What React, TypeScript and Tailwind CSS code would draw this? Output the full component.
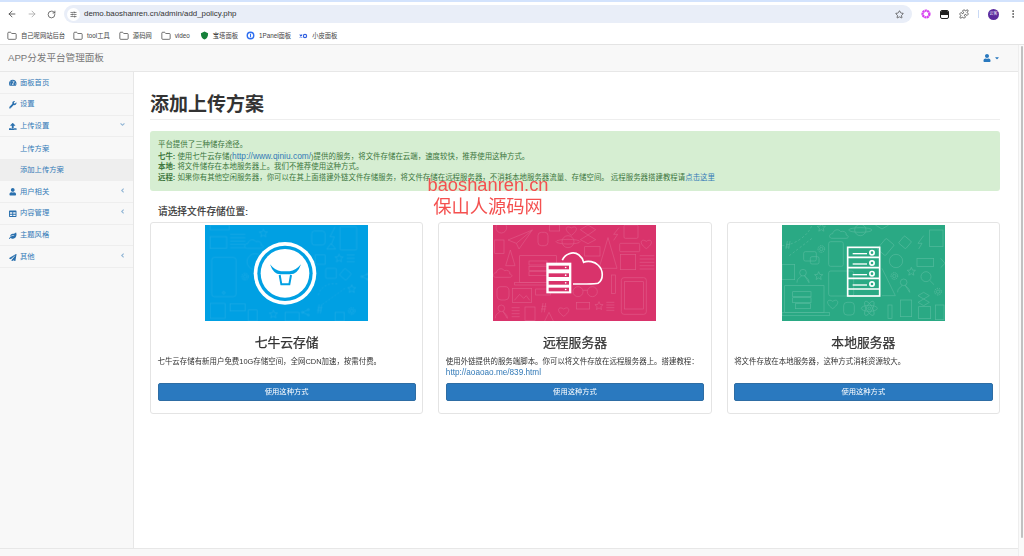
import type { ReactNode } from "react";
import { ArrowLeft, ArrowRight, RotateCw, Star as StarIcon, SlidersHorizontal, Folder, Puzzle, EllipsisVertical } from "lucide-react";
import { FaTachometerAlt, FaWrench, FaUpload, FaUser, FaTable, FaLeaf, FaPaperPlane, FaAngleDown, FaAngleLeft, FaCaretDown } from "react-icons/fa";

const fontStack = "font-['Liberation_Sans','Noto_Sans_CJK_SC',sans-serif]";

function Star({ x, y, r = 13 }: { x: number; y: number; r?: number }) {
  const pts = Array.from({ length: 10 }, (_, i) => {
    const rad = i % 2 ? r * 0.45 : r;
    const a = (Math.PI / 5) * i - Math.PI / 2;
    return `${x + rad * Math.cos(a)},${y + rad * Math.sin(a)}`;
  }).join(" ");
  return <polygon points={pts} />;
}

function Heart({ x, y }: { x: number; y: number }) {
  return <path transform={`translate(${x} ${y})`} d="M0 16 C-26 -2 -14 -16 0 -6 C14 -16 26 -2 0 16Z" />;
}

function Cloud({ x, y }: { x: number; y: number }) {
  return <path transform={`translate(${x} ${y})`} d="M-22 12 C-32 12 -32 -2 -20 -2 C-18 -14 -2 -18 4 -8 C14 -12 24 -4 20 2 C30 4 28 12 20 12Z" />;
}

function Gear({ x, y }: { x: number; y: number }) {
  return (
    <g>
      <circle cx={x} cy={y} r={5} />
      <circle cx={x} cy={y} r={10} strokeDasharray="4 3" strokeWidth={3} />
    </g>
  );
}

function Lines({ x, y, w, n, step = 10 }: { x: number; y: number; w: number; n: number; step?: number }) {
  return (
    <g>
      {Array.from({ length: n }, (_, i) => (
        <line key={i} x1={x} x2={x + w} y1={y + i * step} y2={y + i * step} />
      ))}
    </g>
  );
}

function User({ x, y }: { x: number; y: number }) {
  return (
    <g>
      <circle cx={x} cy={y} r={10} />
      <path d={`M${x - 18} ${y + 30} C${x - 18} ${y + 14} ${x - 6} ${y + 16} ${x - 5} ${y + 9} M${x + 5} ${y + 9} C${x + 6} ${y + 16} ${x + 18} ${y + 14} ${x + 18} ${y + 30}Z`} />
    </g>
  );
}

function Share({ x, y }: { x: number; y: number }) {
  return (
    <g>
      <path d={`M${x + 10} ${y - 8} L${x - 8} ${y} L${x + 10} ${y + 8}`} />
      <circle cx={x + 10} cy={y - 8} r={3} />
      <circle cx={x - 8} cy={y} r={3} />
      <circle cx={x + 10} cy={y + 8} r={3} />
    </g>
  );
}

function Banner({ bg, pattern, patternOpacity, children }: { bg: string; pattern: ReactNode; patternOpacity: number; children: ReactNode }) {
  return (
    <svg viewBox="0 0 489 288" className="block h-[96px] w-[163px]">
      <rect width="489" height="288" fill={bg} />
      <g fill="none" stroke="#fff" strokeWidth={2} opacity={patternOpacity}>
        {pattern}
      </g>
      {children}
    </svg>
  );
}

const bluePattern = (
  <>
    <rect x="15" y="35" width="50" height="35" />
    <rect x="15" y="0" width="58" height="14" />
    <Lines x={75} y={28} w={46} n={5} />
    <rect x="20" y="97" width="73" height="118" rx="8" />
    <circle cx="56" cy="203" r="4" />
    <Cloud x={148} y={58} />
    <circle cx="150" cy="110" r="24" />
    <Gear x={120} y={155} />
    <Star x={175} y={25} />
    <rect x="15" y="235" width="45" height="45" />
    <rect x="75" y="236" width="45" height="22" />
    <rect x="130" y="255" width="26" height="33" />
    <Star x={205} y={268} />
    <rect x="240" y="262" width="42" height="26" />
    <Share x={300} y={262} />
    <path d="M338 248 H352 M336 256 H350 M342 238 L338 266 M350 238 L346 266" />
    <rect x="320" y="18" width="40" height="42" rx="8" />
    <path d="M390 5 L375 35 H388 L378 60" />
    <rect x="405" y="5" width="50" height="70" rx="3" />
    <path d="M365 72 L378 55 L392 72Z" />
    <rect x="330" y="90" width="30" height="28" />
    <Star x={402} y={100} />
    <Lines x={425} y={90} w={24} n={3} />
    <rect x="362" y="130" width="32" height="30" rx="3" />
    <rect x="408" y="135" width="26" height="26" rx="3" transform="rotate(40 421 148)" />
    <Share x={478} y={155} />
    <Star x={440} y={192} />
    <path d="M340 210 C345 185 375 170 400 178 M352 238 L420 190" strokeDasharray="6 5" />
    <Gear x={440} y={258} />
    <rect x="390" y="262" width="28" height="26" />
  </>
);

const pinkPattern = (
  <>
    <path d="M45 45 L118 15 L78 72 L70 55Z M70 55 L118 15" />
    <rect x="5" y="45" width="28" height="40" />
    <circle cx="25" cy="8" r="16" />
    <rect x="135" y="22" width="30" height="40" rx="10" />
    <rect x="170" y="0" width="30" height="18" />
    <Heart x={235} y={15} />
    <circle cx="225" cy="50" r="18" />
    <ellipse cx="225" cy="50" rx="36" ry="7" />
    <path d="M262 14 L285 0 L308 14 L285 30Z M262 44 L285 30 L308 44 L285 56Z" />
    <path d="M378 8 L362 28 H374 L362 46" />
    <rect x="393" y="0" width="42" height="40" rx="4" />
    <Heart x={460} y={55} />
    <path d="M52 75 L38 122 H66Z" />
    <path d="M345 38 L318 130 H372Z" />
    <rect x="380" y="55" width="60" height="25" rx="3" />
    <rect x="275" y="65" width="46" height="28" />
    <rect x="382" y="88" width="46" height="46" />
    <Lines x={440} y={92} w={44} n={5} />
    <rect x="80" y="92" width="110" height="80" />
    <rect x="65" y="172" width="130" height="8" />
    <rect x="108" y="108" width="54" height="12" />
    <rect x="108" y="124" width="54" height="12" />
    <rect x="108" y="140" width="54" height="12" />
    <Cloud x={30} y={145} />
    <rect x="355" y="150" width="12" height="55" />
    <rect x="385" y="158" width="75" height="110" rx="8" />
    <rect x="394" y="170" width="57" height="82" />
    <rect x="12" y="185" width="36" height="40" rx="12" />
    <rect x="58" y="190" width="58" height="42" />
    <path d="M64 226 L80 208 L92 220 L100 212 L110 226" />
    <rect x="128" y="192" width="44" height="18" />
    <circle cx="255" cy="200" r="15" />
    <circle cx="298" cy="200" r="15" />
    <path d="M270 196 H283" />
    <Lines x={56} y={248} w={24} n={4} step={9} />
    <rect x="96" y="246" width="30" height="40" />
    <path d="M146 244 H160 M144 252 H158 M150 234 L146 262 M158 234 L154 262" />
    <Heart x={212} y={258} />
    <rect x="250" y="232" width="40" height="20" />
    <Star x={318} y={243} />
    <Lines x={340} y={232} w={24} n={4} step={8} />
    <path d="M168 262 L155 288 M168 262 L181 288" />
    <User x={25} y={250} />
  </>
);

const greenPattern = (
  <>
    <path d="M0 62 C40 60 80 30 90 0 M22 92 L90 40" strokeDasharray="7 6" />
    <Star x={118} y={8} />
    <Cloud x={172} y={28} />
    <circle cx="235" cy="15" r="17" />
    <ellipse cx="235" cy="15" rx="35" ry="7" />
    <path d="M12 58 H24 M10 66 H22 M16 48 L12 72 M24 48 L20 72" />
    <Gear x={118} y={72} />
    <rect x="140" y="50" width="44" height="74" rx="6" />
    <rect x="65" y="80" width="38" height="28" rx="5" />
    <rect x="85" y="95" width="26" height="22" rx="5" />
    <rect x="295" y="45" width="32" height="42" rx="3" transform="rotate(40 311 66)" />
    <path d="M280 0 L300 12 L320 0" />
    <rect x="355" y="38" width="28" height="28" rx="3" transform="rotate(40 369 52)" />
    <path d="M425 32 L408 55 H420 L410 72" />
    <rect x="443" y="15" width="40" height="50" />
    <circle cx="342" cy="108" r="20" />
    <rect x="405" y="100" width="50" height="24" />
    <path d="M476 100 L489 115 L476 128" />
    <Star x={110} y={153} />
    <User x={63} y={143} />
    <rect x="0" y="118" width="38" height="46" />
    <Gear x={337} y={153} />
    <Star x={388} y={140} />
    <circle cx="432" cy="155" r="15" />
    <path d="M443 166 L456 179" />
    <rect x="140" y="138" width="75" height="75" rx="6" />
    <path d="M300 130 L340 212 H300" />
    <User x={365} y={172} />
    <rect x="8" y="182" width="118" height="80" />
    <rect x="0" y="262" width="142" height="10" />
    <rect x="32" y="200" width="55" height="15" />
    <rect x="32" y="218" width="55" height="15" />
    <rect x="40" y="236" width="45" height="15" />
    <Heart x={152} y={235} />
    <rect x="185" y="232" width="32" height="38" rx="10" />
    <circle cx="262" cy="250" r="4" />
    <ellipse cx="262" cy="250" rx="24" ry="9" />
    <ellipse cx="262" cy="250" rx="24" ry="9" transform="rotate(60 262 250)" />
    <ellipse cx="262" cy="250" rx="24" ry="9" transform="rotate(120 262 250)" />
    <rect x="318" y="240" width="12" height="40" />
    <rect x="355" y="225" width="34" height="50" />
    <path d="M408 212 L425 202 L442 212 L425 222Z M408 232 L425 222 L442 232 L425 242Z" />
    <Gear x={468} y={200} />
    <rect x="410" y="245" width="36" height="36" />
    <rect x="460" y="240" width="26" height="44" />
  </>
);

function QiniuBanner() {
  return (
    <Banner bg="#00a0e3" pattern={bluePattern} patternOpacity={0.12}>
      <circle cx="240" cy="145" r="94" fill="#fff" />
      <circle cx="240" cy="145" r="83" fill="#00a0e3" />
      <circle cx="240" cy="145" r="73" fill="#fff" />
      <path d="M195 118 Q205 148 226 148 H256 Q278 148 288 118 Q272 137 254 139 H228 Q210 137 195 118Z" fill="#00a0e3" />
      <path d="M224 150 L229 178 H253 L258 150" fill="none" stroke="#00a0e3" strokeWidth="6" />
    </Banner>
  );
}

function RemoteBanner() {
  return (
    <Banner bg="#d9336b" pattern={pinkPattern} patternOpacity={0.18}>
      <path d="M208 106 C214 88 240 76 258 90 C266 96 270 104 272 112 C285 106 305 110 315 120 C332 135 332 165 315 175 C308 178 300 177 240 177" fill="none" stroke="#fff" strokeWidth="5" />
      <rect x="160" y="113" width="75" height="92" fill="#fff" />
      {[122, 145, 168, 188].map((y) => (
        <g key={y}>
          <rect x="167" y={y} width="61" height="11" fill="#d9336b" />
          <circle cx="218" cy={y + 5.5} r="2.5" fill="#fff" />
        </g>
      ))}
    </Banner>
  );
}

function LocalBanner() {
  return (
    <Banner bg="#2aa984" pattern={greenPattern} patternOpacity={0.2}>
      <g fill="none" stroke="#fff" strokeWidth="5">
        <rect x="197" y="67" width="96" height="146" />
        <path d="M197 97 H293 M197 128 H293 M197 160 H293 M197 192 H293" />
        {[83, 114, 146, 177].map((y) => (
          <g key={y}>
            <line x1="212" x2="255" y1={y + 3} y2={y + 3} strokeWidth="4" />
            <circle cx="270" cy={y} r="6.5" />
          </g>
        ))}
      </g>
    </Banner>
  );
}

function Bookmark({ icon, label, className }: { icon: ReactNode; label: string; className: string }) {
  return (
    <div className={`flex items-center gap-[4px] text-[6.3px] text-[#444] ${className}`}>
      {icon}
      <span>{label}</span>
    </div>
  );
}

function BrowserChrome() {
  const folder = <Folder size={10} color="#444" strokeWidth={1.8} />;
  return (
    <div className="flex-shrink-0">
      <div className="h-[2px] bg-[#d3e3fd]" />
      <div className="flex h-[24px] items-center bg-white">
        <ArrowLeft size={10} color="#474747" className="ml-[7px]" />
        <ArrowRight size={10} color="#a8a8a8" className="ml-[10px]" />
        <RotateCw size={9} color="#474747" className="ml-[10px]" />
        <div className="ml-[8px] flex h-[18px] w-[848px] items-center rounded-full bg-[#e9eef8] pl-[3px]">
          <div className="flex h-[13px] w-[13px] items-center justify-center rounded-full bg-white">
            <SlidersHorizontal size={7} color="#333" />
          </div>
          <span className="ml-[4px] text-[7.9px] text-[#333]">demo.baoshanren.cn/admin/add_policy.php</span>
          <StarIcon size={9} color="#474747" strokeWidth={2} className="ml-auto mr-[8px]" />
        </div>
        <svg viewBox="0 0 10 10" className="ml-[9px] h-[10px] w-[10px]">
          <circle cx="5" cy="5" r="3.4" fill="none" stroke="#d63ff0" strokeWidth="2.4" strokeDasharray="2 0.4" />
        </svg>
        <div className="ml-[9px] flex h-[9px] w-[9px] flex-col overflow-hidden rounded-[2px] border border-[#222]">
          <div className="h-[4px] bg-[#222]" />
        </div>
        <Puzzle size={10} color="#474747" className="ml-[10px]" />
        <div className="ml-[9px] h-[8px] w-px bg-[#c9d9f5]" />
        <div className="ml-[9px] flex h-[11px] w-[11px] items-center justify-center rounded-full bg-[#5b2a9d] text-[4px] text-white">云客</div>
        <EllipsisVertical size={10} color="#474747" className="ml-[9px]" />
      </div>
      <div className="flex h-[18px] items-center bg-white pl-[7px] pt-px">
        <Bookmark icon={folder} label="自己呢网站后台" className="" />
        <Bookmark icon={folder} label="tool工具" className="ml-[8px]" />
        <Bookmark icon={folder} label="源码网" className="ml-[9px]" />
        <Bookmark icon={folder} label="video" className="ml-[9px]" />
        <Bookmark
          icon={
            <svg viewBox="0 0 10 10" className="h-[9px] w-[9px]">
              <path d="M5 0.5 L9 2.5 C9 6.5 7.5 8.5 5 9.5 C2.5 8.5 1 6.5 1 2.5Z" fill="#16803a" />
            </svg>
          }
          label="宝塔面板"
          className="ml-[10px]"
        />
        <Bookmark
          icon={
            <svg viewBox="0 0 10 10" className="h-[9px] w-[9px]">
              <circle cx="5" cy="5" r="3.6" fill="none" stroke="#2f6ff0" strokeWidth="1.6" />
              <rect x="4.4" y="3" width="1.2" height="4" fill="#2f6ff0" />
            </svg>
          }
          label="1Panel面板"
          className="ml-[8px]"
        />
        <Bookmark
          icon={
            <svg viewBox="0 0 12 8" className="h-[6px] w-[9px]">
              <path d="M1 2 L4 6 M4 2 L1 6" stroke="#2f5fe0" strokeWidth="1.5" />
              <circle cx="8" cy="4" r="2.2" fill="none" stroke="#2f5fe0" strokeWidth="1.5" />
            </svg>
          }
          label="小皮面板"
          className="ml-[8px]"
        />
      </div>
      <div className="h-px bg-[#e4e4e4]" />
    </div>
  );
}

const menu = [
  { label: "面板首页", icon: FaTachometerAlt },
  { label: "设置", icon: FaWrench },
  { label: "上传设置", icon: FaUpload, arrow: "down" },
  { label: "上传方案", sub: true },
  { label: "添加上传方案", sub: true, active: true },
  { label: "用户相关", icon: FaUser, arrow: "left" },
  { label: "内容管理", icon: FaTable, arrow: "left" },
  { label: "主题风格", icon: FaLeaf },
  { label: "其他", icon: FaPaperPlane, arrow: "left" },
];

function Sidebar() {
  return (
    <aside className="w-[134px] flex-shrink-0 border-r border-[#e7e7e7] bg-[#f8f8f8]">
      {menu.map((m) => {
        const Icon = m.icon;
        return (
          <div
            key={m.label}
            className={`flex h-[21.8px] items-center pt-[1.5px] text-[7.3px] text-[#337ab7] ${m.sub ? "pl-[20px]" : "border-b border-[#eeeeee] pl-[9px]"} ${m.active ? "bg-[#eeeeee]" : ""}`}
          >
            {Icon && (
              <span className="flex w-[11px] flex-shrink-0">
                <Icon size={7.5} color="#2a70ae" />
              </span>
            )}
            <span>{m.label}</span>
            {m.arrow === "down" && <FaAngleDown size={7} color="#8fb4d4" className="ml-auto mr-[7px] -mt-[4px]" />}
            {m.arrow === "left" && <FaAngleLeft size={7} color="#8fb4d4" className="ml-auto mr-[7px] -mt-[4px]" />}
          </div>
        );
      })}
    </aside>
  );
}

function StorageCard({ banner, title, children }: { banner: ReactNode; title: string; children: ReactNode }) {
  return (
    <div className="flex h-[192px] flex-col rounded-[3px] border border-[#e4e4e4] bg-white px-[6.5px] pt-[2px]">
      <div className="flex justify-center">{banner}</div>
      <h3 className="mt-[14px] text-center text-[12.8px] leading-[16px] text-[#333] [-webkit-text-stroke:0.25px_#333]">{title}</h3>
      <div className="mt-[6px] h-[26px] text-[7.45px] leading-[10.5px] text-[#333]">{children}</div>
      <button className="h-[18px] w-full rounded-[2px] border border-[#2e6da4] bg-[#2a79bf] text-[7.3px] text-white">使用这种方式</button>
    </div>
  );
}

function Content() {
  return (
    <main className="min-w-0 flex-1 bg-white pl-[16px] pr-[18px]">
      <div className="flex h-[48px] items-end border-b border-[#eeeeee] pb-[1px]">
        <h1 className="text-[19px] font-bold leading-[26px] text-[#333]">添加上传方案</h1>
      </div>
      <div className="mt-[11px] h-[60px] rounded-[3px] bg-[#d6eed2] px-[8px] pt-[9px] text-[7.45px] leading-[10.6px] text-[#3c763d]">
        <p>平台提供了三种储存途径。</p>
        <p>
          <b>七牛:</b> 使用七牛云存储(<span className="text-[8.4px] text-[#337ab7]">http://www.qiniu.com/</span>)提供的服务，将文件存储在云端，速度较快，推荐使用这种方式。
        </p>
        <p>
          <b>本地:</b> 将文件储存在本地服务器上。我们不推荐使用这种方式。
        </p>
        <p>
          <b>远程:</b> 如果你有其他空闲服务器，你可以在其上面搭建外链文件存储服务，将文件存储在远程服务器，不消耗本地服务器流量、存储空间。 远程服务器搭建教程请<span className="text-[#337ab7]">点击这里</span>
        </p>
      </div>
      <div className="mt-[15px] pl-[8px] text-[9.7px] leading-[12px] text-[#333] [-webkit-text-stroke:0.2px_#333]">请选择文件存储位置:</div>
      <div className="mt-[4px] grid grid-cols-3 gap-[15px]">
        <StorageCard banner={<QiniuBanner />} title="七牛云存储">
          七牛云存储有新用户免费10G存储空间，全网CDN加速，按需付费。
        </StorageCard>
        <StorageCard banner={<RemoteBanner />} title="远程服务器">
          使用外链提供的服务端脚本。你可以将文件存放在远程服务器上。搭建教程：
          <br />
          <span className="text-[8.2px] text-[#337ab7]">http://aoaoao.me/839.html</span>
        </StorageCard>
        <StorageCard banner={<LocalBanner />} title="本地服务器">
          将文件存放在本地服务器，这种方式消耗资源较大。
        </StorageCard>
      </div>
    </main>
  );
}

export default function App() {
  return (
    <div className={`relative flex h-[556px] w-[1024px] flex-col overflow-hidden bg-white ${fontStack}`}>
      <BrowserChrome />
      <div className="flex min-h-0 flex-1">
        <div className="flex min-w-0 flex-1 flex-col">
          <div className="flex h-[27px] flex-shrink-0 items-center justify-between border-b border-[#e7e7e7] bg-[#f8f8f8] pl-[8px] pr-[18px]">
            <span className="text-[9.6px] text-[#777]">APP分发平台管理面板</span>
            <span className="flex items-center gap-[3px]">
              <FaUser size={8} color="#2a79bf" />
              <FaCaretDown size={6} color="#2a79bf" />
            </span>
          </div>
          <div className="flex min-h-0 flex-1">
            <Sidebar />
            <Content />
          </div>
          <div className="h-[8px] flex-shrink-0 border-t border-[#e7e7e7] bg-[#f8f8f8]" />
        </div>
        <div className="w-[6px] flex-shrink-0 border-l border-[#eeeeee] bg-[#fafafa] pl-[2px] pr-px pt-px">
          <div className="h-[492px] rounded-full bg-[#c1c1c1]" />
        </div>
      </div>
      {/* watermark sits over the page */}
      <div className="pointer-events-none absolute left-[427px] top-[174px] w-[122px] text-center text-[18.3px] leading-[22px] text-[#f4504f]">
        <div className="whitespace-nowrap">baoshanren.cn</div>
        <div className="whitespace-nowrap">保山人源码网</div>
      </div>
    </div>
  );
}
